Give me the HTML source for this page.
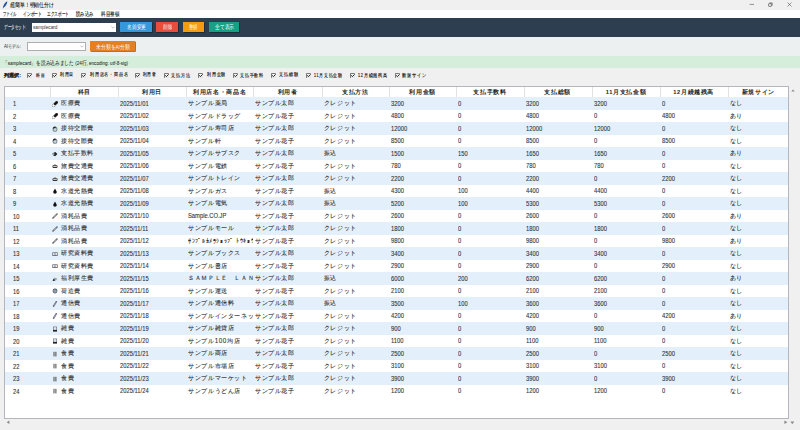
<!DOCTYPE html>
<html><head><meta charset="utf-8"><style>
*{box-sizing:border-box;margin:0;padding:0}
html,body{width:800px;height:430px;overflow:hidden;background:#f0f0f0;font-family:"Liberation Sans",sans-serif;color:#222}
.a{position:absolute}
.t{position:absolute;white-space:nowrap;line-height:1;-webkit-text-stroke:0.1px currentColor}
svg{display:block}
</style></head><body>

<div class="a" style="left:0;top:0;width:800px;height:9.5px;background:#f0f0f0"></div>
<svg class="a" style="left:2px;top:1px" width="6" height="8" viewBox="0 0 6 8"><path d="M5.4 0.3 C3.6 0.9 1.6 3.2 1.1 5.8 L0.8 7.8 L1.6 6.6 C3.8 5.6 5.1 3 5.4 0.3Z" fill="#2f5fa8"/><path d="M1.4 6.4 L4.6 1.2" stroke="#1c3a70" stroke-width="0.4"/></svg>
<svg class="a" style="left:749px;top:2px" width="6" height="5" viewBox="0 0 6 5"><path d="M0.6 2.4 H5.0" stroke="#444" stroke-width="0.55"/></svg>
<svg class="a" style="left:767.5px;top:2px" width="5" height="5" viewBox="0 0 5 5"><path d="M1.5 0.9 H4.2 V3.6" fill="none" stroke="#444" stroke-width="0.6"/><rect x="0.6" y="1.6" width="2.8" height="2.8" rx="0.5" fill="none" stroke="#444" stroke-width="0.65"/></svg>
<svg class="a" style="left:787.3px;top:2.3px" width="5" height="5" viewBox="0 0 5 5"><path d="M0.5 0.5 L4.5 4.5 M4.5 0.5 L0.5 4.5" stroke="#444" stroke-width="0.55"/></svg>
<div class="a" style="left:0;top:9.5px;width:800px;height:8.5px;background:#fff"></div>
<div class="a" style="left:0;top:18px;width:800px;height:18.7px;background:#2c3e50"></div>
<div class="a" style="left:31.6px;top:22.8px;width:84.6px;height:8.8px;background:#fff"></div>
<svg class="a" style="left:110.8px;top:26px" width="4" height="3" viewBox="0 0 4 3"><path d="M0.4 0.6 L2 2.2 L3.6 0.6" fill="none" stroke="#999" stroke-width="0.6"/></svg>
<div class="a" style="left:120.3px;top:22px;width:31.700000000000003px;height:10.2px;background:#3498db;box-shadow:0.7px 0.7px 0 #1a252f"></div>
<div class="a" style="left:156.3px;top:22px;width:22.0px;height:10.2px;background:#e74c3c;box-shadow:0.7px 0.7px 0 #1a252f"></div>
<div class="a" style="left:183px;top:22px;width:21.30000000000001px;height:10.2px;background:#f39c12;box-shadow:0.7px 0.7px 0 #1a252f"></div>
<div class="a" style="left:209px;top:22px;width:30px;height:10.2px;background:#16a085;box-shadow:0.7px 0.7px 0 #1a252f"></div>
<div class="a" style="left:0;top:36.7px;width:800px;height:19.3px;background:#ecf0f1"></div>
<div class="a" style="left:26.5px;top:42.2px;width:59px;height:8.6px;background:#fff;border:0.6px solid #adadad"></div>
<svg class="a" style="left:80.3px;top:45.2px" width="4" height="3" viewBox="0 0 4 3"><path d="M0.4 0.6 L2 2.2 L3.6 0.6" fill="none" stroke="#999" stroke-width="0.6"/></svg>
<div class="a" style="left:90px;top:41.3px;width:44.8px;height:10.2px;background:#e67e22;box-shadow:0.7px 0.7px 0 #7a4310"></div>
<div class="a" style="left:0;top:56px;width:800px;height:12.3px;background:#d5eedb"></div>
<svg class="a" style="left:27px;top:72.8px" width="5.2" height="5.2" viewBox="0 0 5.2 5.2"><rect x="0" y="0" width="5.2" height="5.2" fill="#f7f7f7"/><path d="M0.5 5 V0.5 H4.8" fill="none" stroke="#555" stroke-width="0.8"/><path d="M4.8 0.5 V4.8 H0.5" fill="none" stroke="#c8c8c8" stroke-width="0.5"/><path d="M1.3 2.3 L2.4 3.7 L4.6 1.3" fill="none" stroke="#222" stroke-width="1"/></svg>
<svg class="a" style="left:51.5px;top:72.8px" width="5.2" height="5.2" viewBox="0 0 5.2 5.2"><rect x="0" y="0" width="5.2" height="5.2" fill="#f7f7f7"/><path d="M0.5 5 V0.5 H4.8" fill="none" stroke="#555" stroke-width="0.8"/><path d="M4.8 0.5 V4.8 H0.5" fill="none" stroke="#c8c8c8" stroke-width="0.5"/><path d="M1.3 2.3 L2.4 3.7 L4.6 1.3" fill="none" stroke="#222" stroke-width="1"/></svg>
<svg class="a" style="left:81px;top:72.8px" width="5.2" height="5.2" viewBox="0 0 5.2 5.2"><rect x="0" y="0" width="5.2" height="5.2" fill="#f7f7f7"/><path d="M0.5 5 V0.5 H4.8" fill="none" stroke="#555" stroke-width="0.8"/><path d="M4.8 0.5 V4.8 H0.5" fill="none" stroke="#c8c8c8" stroke-width="0.5"/><path d="M1.3 2.3 L2.4 3.7 L4.6 1.3" fill="none" stroke="#222" stroke-width="1"/></svg>
<svg class="a" style="left:135px;top:72.8px" width="5.2" height="5.2" viewBox="0 0 5.2 5.2"><rect x="0" y="0" width="5.2" height="5.2" fill="#f7f7f7"/><path d="M0.5 5 V0.5 H4.8" fill="none" stroke="#555" stroke-width="0.8"/><path d="M4.8 0.5 V4.8 H0.5" fill="none" stroke="#c8c8c8" stroke-width="0.5"/><path d="M1.3 2.3 L2.4 3.7 L4.6 1.3" fill="none" stroke="#222" stroke-width="1"/></svg>
<svg class="a" style="left:164px;top:72.8px" width="5.2" height="5.2" viewBox="0 0 5.2 5.2"><rect x="0" y="0" width="5.2" height="5.2" fill="#f7f7f7"/><path d="M0.5 5 V0.5 H4.8" fill="none" stroke="#555" stroke-width="0.8"/><path d="M4.8 0.5 V4.8 H0.5" fill="none" stroke="#c8c8c8" stroke-width="0.5"/><path d="M1.3 2.3 L2.4 3.7 L4.6 1.3" fill="none" stroke="#222" stroke-width="1"/></svg>
<svg class="a" style="left:197.8px;top:72.8px" width="5.2" height="5.2" viewBox="0 0 5.2 5.2"><rect x="0" y="0" width="5.2" height="5.2" fill="#f7f7f7"/><path d="M0.5 5 V0.5 H4.8" fill="none" stroke="#555" stroke-width="0.8"/><path d="M4.8 0.5 V4.8 H0.5" fill="none" stroke="#c8c8c8" stroke-width="0.5"/><path d="M1.3 2.3 L2.4 3.7 L4.6 1.3" fill="none" stroke="#222" stroke-width="1"/></svg>
<svg class="a" style="left:232.5px;top:72.8px" width="5.2" height="5.2" viewBox="0 0 5.2 5.2"><rect x="0" y="0" width="5.2" height="5.2" fill="#f7f7f7"/><path d="M0.5 5 V0.5 H4.8" fill="none" stroke="#555" stroke-width="0.8"/><path d="M4.8 0.5 V4.8 H0.5" fill="none" stroke="#c8c8c8" stroke-width="0.5"/><path d="M1.3 2.3 L2.4 3.7 L4.6 1.3" fill="none" stroke="#222" stroke-width="1"/></svg>
<svg class="a" style="left:271.2px;top:72.8px" width="5.2" height="5.2" viewBox="0 0 5.2 5.2"><rect x="0" y="0" width="5.2" height="5.2" fill="#f7f7f7"/><path d="M0.5 5 V0.5 H4.8" fill="none" stroke="#555" stroke-width="0.8"/><path d="M4.8 0.5 V4.8 H0.5" fill="none" stroke="#c8c8c8" stroke-width="0.5"/><path d="M1.3 2.3 L2.4 3.7 L4.6 1.3" fill="none" stroke="#222" stroke-width="1"/></svg>
<svg class="a" style="left:306px;top:72.8px" width="5.2" height="5.2" viewBox="0 0 5.2 5.2"><rect x="0" y="0" width="5.2" height="5.2" fill="#f7f7f7"/><path d="M0.5 5 V0.5 H4.8" fill="none" stroke="#555" stroke-width="0.8"/><path d="M4.8 0.5 V4.8 H0.5" fill="none" stroke="#c8c8c8" stroke-width="0.5"/><path d="M1.3 2.3 L2.4 3.7 L4.6 1.3" fill="none" stroke="#222" stroke-width="1"/></svg>
<svg class="a" style="left:350px;top:72.8px" width="5.2" height="5.2" viewBox="0 0 5.2 5.2"><rect x="0" y="0" width="5.2" height="5.2" fill="#f7f7f7"/><path d="M0.5 5 V0.5 H4.8" fill="none" stroke="#555" stroke-width="0.8"/><path d="M4.8 0.5 V4.8 H0.5" fill="none" stroke="#c8c8c8" stroke-width="0.5"/><path d="M1.3 2.3 L2.4 3.7 L4.6 1.3" fill="none" stroke="#222" stroke-width="1"/></svg>
<svg class="a" style="left:394.5px;top:72.8px" width="5.2" height="5.2" viewBox="0 0 5.2 5.2"><rect x="0" y="0" width="5.2" height="5.2" fill="#f7f7f7"/><path d="M0.5 5 V0.5 H4.8" fill="none" stroke="#555" stroke-width="0.8"/><path d="M4.8 0.5 V4.8 H0.5" fill="none" stroke="#c8c8c8" stroke-width="0.5"/><path d="M1.3 2.3 L2.4 3.7 L4.6 1.3" fill="none" stroke="#222" stroke-width="1"/></svg>
<div class="a" style="left:4.1px;top:86.1px;width:785.3px;height:332.79999999999995px;background:#fff;border:1px solid #b3b7bd"></div>
<div class="a" style="left:50.25px;top:87.19999999999999px;width:0.6px;height:9.600000000000005px;background:#e2e2e2"></div>
<div class="a" style="left:118.1px;top:87.19999999999999px;width:0.6px;height:9.600000000000005px;background:#e2e2e2"></div>
<div class="a" style="left:186.25px;top:87.19999999999999px;width:0.6px;height:9.600000000000005px;background:#e2e2e2"></div>
<div class="a" style="left:253.1px;top:87.19999999999999px;width:0.6px;height:9.600000000000005px;background:#e2e2e2"></div>
<div class="a" style="left:321.9px;top:87.19999999999999px;width:0.6px;height:9.600000000000005px;background:#e2e2e2"></div>
<div class="a" style="left:389px;top:87.19999999999999px;width:0.6px;height:9.600000000000005px;background:#e2e2e2"></div>
<div class="a" style="left:456.25px;top:87.19999999999999px;width:0.6px;height:9.600000000000005px;background:#e2e2e2"></div>
<div class="a" style="left:523.5px;top:87.19999999999999px;width:0.6px;height:9.600000000000005px;background:#e2e2e2"></div>
<div class="a" style="left:591.9px;top:87.19999999999999px;width:0.6px;height:9.600000000000005px;background:#e2e2e2"></div>
<div class="a" style="left:660px;top:87.19999999999999px;width:0.6px;height:9.600000000000005px;background:#e2e2e2"></div>
<div class="a" style="left:727.5px;top:87.19999999999999px;width:0.6px;height:9.600000000000005px;background:#e2e2e2"></div>
<div class="a" style="left:5.1px;top:97.0px;width:783.3px;height:12.5px;background:#e3f0fb"></div>
<div class="a" style="left:52.2px;top:100.7px;width:6px;height:6px"><svg width="6" height="6" viewBox="0 0 6 6"><path d="M1.3 4.7 L4.7 1.3" stroke="#666" stroke-width="2.9" stroke-linecap="round"/><path d="M1.3 4.7 L4.7 1.3" stroke="#fff" stroke-width="2.1" stroke-linecap="round"/><path d="M3 3 L4.7 1.3" stroke="#111" stroke-width="2.4" stroke-linecap="round"/></svg></div>
<div class="a" style="left:52.2px;top:113.2px;width:6px;height:6px"><svg width="6" height="6" viewBox="0 0 6 6"><path d="M1.3 4.7 L4.7 1.3" stroke="#666" stroke-width="2.9" stroke-linecap="round"/><path d="M1.3 4.7 L4.7 1.3" stroke="#fff" stroke-width="2.1" stroke-linecap="round"/><path d="M3 3 L4.7 1.3" stroke="#111" stroke-width="2.4" stroke-linecap="round"/></svg></div>
<div class="a" style="left:5.1px;top:122.0px;width:783.3px;height:12.5px;background:#e3f0fb"></div>
<div class="a" style="left:52.2px;top:125.7px;width:6px;height:6px"><svg width="6" height="6" viewBox="0 0 6 6"><ellipse cx="3" cy="3.2" rx="2.4" ry="2.6" fill="#7a8a90"/><path d="M0.8 2.4 A2.4 2.4 0 0 1 4.2 0.9 L2.5 2.6Z" fill="#222"/><ellipse cx="3.1" cy="3.6" rx="1.4" ry="1.4" fill="#c9d6da"/></svg></div>
<div class="a" style="left:52.2px;top:138.2px;width:6px;height:6px"><svg width="6" height="6" viewBox="0 0 6 6"><ellipse cx="3" cy="3.2" rx="2.4" ry="2.6" fill="#7a8a90"/><path d="M0.8 2.4 A2.4 2.4 0 0 1 4.2 0.9 L2.5 2.6Z" fill="#222"/><ellipse cx="3.1" cy="3.6" rx="1.4" ry="1.4" fill="#c9d6da"/></svg></div>
<div class="a" style="left:5.1px;top:147.0px;width:783.3px;height:12.5px;background:#e3f0fb"></div>
<div class="a" style="left:52.2px;top:150.7px;width:6px;height:6px"><svg width="6" height="6" viewBox="0 0 6 6"><path d="M0.6 2.2 L3.4 0.9 L5.4 3 L3.2 5.2 L0.9 4.2Z" fill="#222"/><path d="M0.8 2.4 L2.4 2 L2.2 4.3 L0.9 4Z" fill="#9fb1b5"/></svg></div>
<div class="a" style="left:52.2px;top:163.2px;width:6px;height:6px"><svg width="6" height="6" viewBox="0 0 6 6"><path d="M1.4 2.4 Q3 0.4 4.6 2.4Z" fill="#333"/><rect x="0.5" y="2.3" width="5" height="2.6" rx="0.8" fill="#333"/><rect x="1.2" y="2.9" width="3.6" height="1" fill="#d8d8d8"/></svg></div>
<div class="a" style="left:5.1px;top:172.0px;width:783.3px;height:12.5px;background:#e3f0fb"></div>
<div class="a" style="left:52.2px;top:175.7px;width:6px;height:6px"><svg width="6" height="6" viewBox="0 0 6 6"><path d="M1.4 2.4 Q3 0.4 4.6 2.4Z" fill="#333"/><rect x="0.5" y="2.3" width="5" height="2.6" rx="0.8" fill="#333"/><rect x="1.2" y="2.9" width="3.6" height="1" fill="#d8d8d8"/></svg></div>
<div class="a" style="left:52.2px;top:188.2px;width:6px;height:6px"><svg width="6" height="6" viewBox="0 0 6 6"><path d="M3 0.4 C3.2 1.4 4.8 2.8 4.8 4 A1.8 1.8 0 0 1 1.2 4 C1.2 2.8 2.8 1.4 3 0.4Z" fill="#111"/></svg></div>
<div class="a" style="left:5.1px;top:197.0px;width:783.3px;height:12.5px;background:#e3f0fb"></div>
<div class="a" style="left:52.2px;top:200.7px;width:6px;height:6px"><svg width="6" height="6" viewBox="0 0 6 6"><path d="M3 0.4 C3.2 1.4 4.8 2.8 4.8 4 A1.8 1.8 0 0 1 1.2 4 C1.2 2.8 2.8 1.4 3 0.4Z" fill="#111"/></svg></div>
<div class="a" style="left:52.2px;top:213.2px;width:6px;height:6px"><svg width="6" height="6" viewBox="0 0 6 6"><path d="M1 5 L5 1" stroke="#555" stroke-width="1.5" stroke-linecap="round"/><path d="M1.6 4.4 L4.5 1.5" stroke="#c8ccd6" stroke-width="0.6"/></svg></div>
<div class="a" style="left:5.1px;top:222.0px;width:783.3px;height:12.5px;background:#e3f0fb"></div>
<div class="a" style="left:52.2px;top:225.7px;width:6px;height:6px"><svg width="6" height="6" viewBox="0 0 6 6"><path d="M1 5 L5 1" stroke="#555" stroke-width="1.5" stroke-linecap="round"/><path d="M1.6 4.4 L4.5 1.5" stroke="#c8ccd6" stroke-width="0.6"/></svg></div>
<div class="a" style="left:52.2px;top:238.2px;width:6px;height:6px"><svg width="6" height="6" viewBox="0 0 6 6"><path d="M1 5 L5 1" stroke="#555" stroke-width="1.5" stroke-linecap="round"/><path d="M1.6 4.4 L4.5 1.5" stroke="#c8ccd6" stroke-width="0.6"/></svg></div>
<div class="a" style="left:5.1px;top:247.0px;width:783.3px;height:12.5px;background:#e3f0fb"></div>
<div class="a" style="left:52.2px;top:250.7px;width:6px;height:6px"><svg width="6" height="6" viewBox="0 0 6 6"><rect x="0.4" y="1.4" width="5.2" height="3.6" fill="#556"/><rect x="1" y="2" width="1.7" height="2.3" fill="#dde4ee"/><rect x="3.3" y="2" width="1.7" height="2.3" fill="#dde4ee"/></svg></div>
<div class="a" style="left:52.2px;top:263.2px;width:6px;height:6px"><svg width="6" height="6" viewBox="0 0 6 6"><rect x="0.4" y="1.4" width="5.2" height="3.6" fill="#556"/><rect x="1" y="2" width="1.7" height="2.3" fill="#dde4ee"/><rect x="3.3" y="2" width="1.7" height="2.3" fill="#dde4ee"/></svg></div>
<div class="a" style="left:5.1px;top:272.0px;width:783.3px;height:12.5px;background:#e3f0fb"></div>
<div class="a" style="left:52.2px;top:275.7px;width:6px;height:6px"><svg width="6" height="6" viewBox="0 0 6 6"><path d="M0.6 5 L2.6 1.4 L5.4 2.8 L4 4.6Z" fill="#9aa4b0"/><path d="M0.6 5 L1.8 2.6 L3 4.4Z" fill="#111"/></svg></div>
<div class="a" style="left:52.2px;top:288.2px;width:6px;height:6px"><svg width="6" height="6" viewBox="0 0 6 6"><circle cx="3" cy="3" r="2.4" fill="#556070"/><circle cx="3" cy="3" r="1.6" fill="#d8dde6"/><path d="M3 0.8 V5.2 M0.8 3 H5.2" stroke="#556070" stroke-width="0.6"/></svg></div>
<div class="a" style="left:5.1px;top:297.0px;width:783.3px;height:12.5px;background:#e3f0fb"></div>
<div class="a" style="left:52.2px;top:300.7px;width:6px;height:6px"><svg width="6" height="6" viewBox="0 0 6 6"><path d="M1.6 5.2 L4.2 0.8" stroke="#6a6a80" stroke-width="1.6" stroke-linecap="round"/><path d="M2 4.4 L3.8 1.4" stroke="#b8c0d0" stroke-width="0.5"/></svg></div>
<div class="a" style="left:52.2px;top:313.2px;width:6px;height:6px"><svg width="6" height="6" viewBox="0 0 6 6"><path d="M1.6 5.2 L4.2 0.8" stroke="#6a6a80" stroke-width="1.6" stroke-linecap="round"/><path d="M2 4.4 L3.8 1.4" stroke="#b8c0d0" stroke-width="0.5"/></svg></div>
<div class="a" style="left:5.1px;top:322.0px;width:783.3px;height:12.5px;background:#e3f0fb"></div>
<div class="a" style="left:52.2px;top:325.7px;width:6px;height:6px"><svg width="6" height="6" viewBox="0 0 6 6"><rect x="1" y="0.6" width="4" height="4.8" fill="#606a78"/><rect x="1.6" y="1.2" width="2.8" height="2.6" fill="#e0e6ee"/><rect x="1" y="4.2" width="4" height="1.2" fill="#111"/></svg></div>
<div class="a" style="left:52.2px;top:338.2px;width:6px;height:6px"><svg width="6" height="6" viewBox="0 0 6 6"><rect x="1" y="0.6" width="4" height="4.8" fill="#606a78"/><rect x="1.6" y="1.2" width="2.8" height="2.6" fill="#e0e6ee"/><rect x="1" y="4.2" width="4" height="1.2" fill="#111"/></svg></div>
<div class="a" style="left:5.1px;top:347.0px;width:783.3px;height:12.5px;background:#e3f0fb"></div>
<div class="a" style="left:52.2px;top:350.7px;width:6px;height:6px"><svg width="6" height="6" viewBox="0 0 6 6"><path d="M2 0.8 V5.4 M3.9 0.8 V5.4" stroke="#333" stroke-width="0.9"/></svg></div>
<div class="a" style="left:52.2px;top:363.2px;width:6px;height:6px"><svg width="6" height="6" viewBox="0 0 6 6"><path d="M2 0.8 V5.4 M3.9 0.8 V5.4" stroke="#333" stroke-width="0.9"/></svg></div>
<div class="a" style="left:5.1px;top:372.0px;width:783.3px;height:12.5px;background:#e3f0fb"></div>
<div class="a" style="left:52.2px;top:375.7px;width:6px;height:6px"><svg width="6" height="6" viewBox="0 0 6 6"><path d="M2 0.8 V5.4 M3.9 0.8 V5.4" stroke="#333" stroke-width="0.9"/></svg></div>
<div class="a" style="left:52.2px;top:388.2px;width:6px;height:6px"><svg width="6" height="6" viewBox="0 0 6 6"><path d="M2 0.8 V5.4 M3.9 0.8 V5.4" stroke="#333" stroke-width="0.9"/></svg></div>
<svg class="a" style="left:790.6px;top:88.8px" width="4" height="3" viewBox="0 0 4 3"><path d="M0.3 2.6 L2 0.4 L3.7 2.6Z" fill="#8a8a8a"/></svg>
<svg class="a" style="left:6px;top:420.3px" width="4" height="5" viewBox="0 0 4 5"><path d="M3.4 0.6 L0.6 2.3 L3.4 4Z" fill="#8a8a8a"/></svg>
<svg class="a" style="left:783.5px;top:420.3px" width="4" height="5" viewBox="0 0 4 5"><path d="M0.4 0.6 L3.4 2.3 L0.4 4Z" fill="#8a8a8a"/></svg>
<svg class="a" style="left:790.3px;top:420.8px" width="5" height="4" viewBox="0 0 5 4"><path d="M0.4 0.4 L4.2 0.4 L2.3 3.2Z" fill="#8a8a8a"/></svg>
<div class="t" id="t0" style="left:10.00px;top:2.92px;font-size:5.6px;color:#222;transform:scaleX(0.815);transform-origin:0 0;-webkit-text-stroke:0.1px currentColor">超簡単！明細仕分け</div>
<div class="t" id="t1" style="left:2.65px;top:11.92px;font-size:5.6px;color:#1a1a1a;transform:scaleX(0.548);transform-origin:0 0;-webkit-text-stroke:0.12px currentColor">ファイル</div>
<div class="t" id="t2" style="left:22.51px;top:11.92px;font-size:5.6px;color:#1a1a1a;transform:scaleX(0.633);transform-origin:0 0;-webkit-text-stroke:0.12px currentColor">インポート</div>
<div class="t" id="t3" style="left:46.56px;top:11.92px;font-size:5.6px;color:#1a1a1a;transform:scaleX(0.609);transform-origin:0 0;-webkit-text-stroke:0.12px currentColor">エクスポート</div>
<div class="t" id="t4" style="left:75.73px;top:11.92px;font-size:5.6px;color:#1a1a1a;transform:scaleX(0.731);transform-origin:0 0;-webkit-text-stroke:0.12px currentColor">読み込み</div>
<div class="t" id="t5" style="left:100.75px;top:11.92px;font-size:5.6px;color:#1a1a1a;transform:scaleX(0.753);transform-origin:0 0;-webkit-text-stroke:0.12px currentColor">科目整頓</div>
<div class="t" id="t6" style="left:4.27px;top:25.12px;font-size:5.6px;color:#e6ebee;transform:scaleX(0.591);transform-origin:0 0;-webkit-text-stroke:0.08px currentColor">データセット:</div>
<div class="t" id="t7" style="left:32.77px;top:24.00px;font-size:6.0px;color:#333;transform:scaleX(0.789);transform-origin:0 0;-webkit-text-stroke:0">samplecard</div>
<div class="t" id="t8" style="left:126.62px;top:24.77px;font-size:5.5px;color:#fff;transform:scaleX(0.801);transform-origin:0 0;-webkit-text-stroke:0">名前変更</div>
<div class="t" id="t9" style="left:163.25px;top:24.77px;font-size:5.5px;color:#fff;transform:scaleX(0.750);transform-origin:0 0;-webkit-text-stroke:0">削除</div>
<div class="t" id="t10" style="left:189.00px;top:24.77px;font-size:5.5px;color:#fff;transform:scaleX(0.714);transform-origin:0 0;-webkit-text-stroke:0">整頓</div>
<div class="t" id="t11" style="left:215.24px;top:24.77px;font-size:5.5px;color:#fff;transform:scaleX(0.792);transform-origin:0 0;-webkit-text-stroke:0">全て表示</div>
<div class="t" id="t12" style="left:4.03px;top:43.53px;font-size:5.4px;color:#2a2a2a;transform:scaleX(0.792);transform-origin:0 0;-webkit-text-stroke:0">AIモデル:</div>
<div class="t" id="t13" style="left:96.00px;top:44.98px;font-size:5.5px;color:#fff;transform:scaleX(0.817);transform-origin:0 0;-webkit-text-stroke:0">未分類をAI分類</div>
<div class="t" id="t14" style="left:2.63px;top:60.61px;font-size:5.8px;color:#1f2a22;transform:scaleX(0.788);transform-origin:0 0;-webkit-text-stroke:0.05px currentColor">「samplecard」を読み込みました (24行, encoding: utf-8-sig)</div>
<div class="t" id="t15" style="left:4.01px;top:73.43px;font-size:5.4px;color:#222;font-weight:bold;transform:scaleX(1.012);transform-origin:0 0;">列選択:</div>
<div class="t" id="t16" style="left:35.76px;top:73.77px;font-size:4.6px;color:#1e1e1e;transform:scaleX(0.759);transform-origin:0 0;letter-spacing:1.0px;-webkit-text-stroke:0.15px currentColor">科目</div>
<div class="t" id="t17" style="left:59.78px;top:73.27px;font-size:4.6px;color:#1e1e1e;transform:scaleX(0.778);transform-origin:0 0;letter-spacing:1.0px;-webkit-text-stroke:0.15px currentColor">利用日</div>
<div class="t" id="t18" style="left:89.91px;top:73.27px;font-size:4.6px;color:#1e1e1e;transform:scaleX(0.802);transform-origin:0 0;letter-spacing:1.0px;-webkit-text-stroke:0.15px currentColor">利用店名・商品名</div>
<div class="t" id="t19" style="left:142.74px;top:73.27px;font-size:4.6px;color:#1e1e1e;transform:scaleX(0.737);transform-origin:0 0;letter-spacing:1.0px;-webkit-text-stroke:0.15px currentColor">利用者</div>
<div class="t" id="t20" style="left:171.00px;top:73.77px;font-size:4.6px;color:#1e1e1e;transform:scaleX(0.828);transform-origin:0 0;letter-spacing:1.0px;-webkit-text-stroke:0.15px currentColor">支払方法</div>
<div class="t" id="t21" style="left:206.79px;top:73.27px;font-size:4.6px;color:#1e1e1e;transform:scaleX(0.792);transform-origin:0 0;letter-spacing:1.0px;-webkit-text-stroke:0.15px currentColor">利用金額</div>
<div class="t" id="t22" style="left:240.00px;top:73.77px;font-size:4.6px;color:#1e1e1e;transform:scaleX(0.800);transform-origin:0 0;letter-spacing:1.0px;-webkit-text-stroke:0.15px currentColor">支払手数料</div>
<div class="t" id="t23" style="left:279.00px;top:73.27px;font-size:4.6px;color:#1e1e1e;transform:scaleX(0.828);transform-origin:0 0;letter-spacing:1.0px;-webkit-text-stroke:0.15px currentColor">支払総額</div>
<div class="t" id="t24" style="left:314.00px;top:73.77px;font-size:4.6px;color:#1e1e1e;transform:scaleX(0.778);transform-origin:0 0;letter-spacing:1.0px;-webkit-text-stroke:0.15px currentColor">11月支払金額</div>
<div class="t" id="t25" style="left:358.00px;top:73.77px;font-size:4.6px;color:#1e1e1e;transform:scaleX(0.806);transform-origin:0 0;letter-spacing:1.0px;-webkit-text-stroke:0.15px currentColor">12月繰越残高</div>
<div class="t" id="t26" style="left:402.00px;top:73.77px;font-size:4.6px;color:#1e1e1e;transform:scaleX(0.828);transform-origin:0 0;letter-spacing:1.0px;-webkit-text-stroke:0.15px currentColor">新規サイン</div>
<div class="t" id="t27" style="left:50.25px;top:90.32px;font-size:5.6px;color:#1a1a1a;font-weight:bold;width:67.85px;text-align:center;letter-spacing:0.65px;-webkit-text-stroke:0">科目</div>
<div class="t" id="t28" style="left:118.10px;top:90.32px;font-size:5.6px;color:#1a1a1a;font-weight:bold;width:68.15px;text-align:center;letter-spacing:0.65px;-webkit-text-stroke:0">利用日</div>
<div class="t" id="t29" style="left:186.25px;top:90.32px;font-size:5.6px;color:#1a1a1a;font-weight:bold;width:66.85px;text-align:center;letter-spacing:0.65px;-webkit-text-stroke:0">利用店名・商品名</div>
<div class="t" id="t30" style="left:253.10px;top:90.32px;font-size:5.6px;color:#1a1a1a;font-weight:bold;width:68.80px;text-align:center;letter-spacing:0.65px;-webkit-text-stroke:0">利用者</div>
<div class="t" id="t31" style="left:321.90px;top:90.32px;font-size:5.6px;color:#1a1a1a;font-weight:bold;width:67.10px;text-align:center;letter-spacing:0.65px;-webkit-text-stroke:0">支払方法</div>
<div class="t" id="t32" style="left:389.00px;top:90.32px;font-size:5.6px;color:#1a1a1a;font-weight:bold;width:67.25px;text-align:center;letter-spacing:0.65px;-webkit-text-stroke:0">利用金額</div>
<div class="t" id="t33" style="left:456.25px;top:90.32px;font-size:5.6px;color:#1a1a1a;font-weight:bold;width:67.25px;text-align:center;letter-spacing:0.65px;-webkit-text-stroke:0">支払手数料</div>
<div class="t" id="t34" style="left:523.50px;top:90.32px;font-size:5.6px;color:#1a1a1a;font-weight:bold;width:68.40px;text-align:center;letter-spacing:0.65px;-webkit-text-stroke:0">支払総額</div>
<div class="t" id="t35" style="left:591.90px;top:90.32px;font-size:5.6px;color:#1a1a1a;font-weight:bold;width:68.10px;text-align:center;letter-spacing:0.65px;-webkit-text-stroke:0">11月支払金額</div>
<div class="t" id="t36" style="left:660.00px;top:90.32px;font-size:5.6px;color:#1a1a1a;font-weight:bold;width:67.50px;text-align:center;letter-spacing:0.65px;-webkit-text-stroke:0">12月繰越残高</div>
<div class="t" id="t37" style="left:727.50px;top:90.32px;font-size:5.6px;color:#1a1a1a;font-weight:bold;width:61.40px;text-align:center;letter-spacing:0.65px;-webkit-text-stroke:0">新規サイン</div>
<div class="t" id="t38" style="left:13.40px;top:101.05px;font-size:6.4px;color:#333;transform:scaleX(0.9);transform-origin:0 0">1</div>
<div class="t" id="t39" style="left:61.00px;top:100.19px;font-size:6.3px;color:#3a3a3a;letter-spacing:0.55px">医療費</div>
<div class="t" id="t40" style="left:120.10px;top:100.94px;font-size:6.6px;color:#333;width:65.65px;overflow:hidden;transform:scaleX(0.88);transform-origin:0 0">2025/11/01</div>
<div class="t" id="t41" style="left:188.25px;top:100.19px;font-size:6.3px;color:#333;width:64.35px;overflow:hidden;letter-spacing:0.6px">サンプル薬局</div>
<div class="t" id="t42" style="left:255.10px;top:100.19px;font-size:6.3px;color:#333;width:66.30px;overflow:hidden;letter-spacing:0.6px">サンプル太郎</div>
<div class="t" id="t43" style="left:323.90px;top:100.19px;font-size:6.3px;color:#333;width:64.60px;overflow:hidden;letter-spacing:0.6px">クレジット</div>
<div class="t" id="t44" style="left:391.00px;top:100.94px;font-size:6.6px;color:#333;width:64.75px;overflow:hidden;transform:scaleX(0.88);transform-origin:0 0">3200</div>
<div class="t" id="t45" style="left:458.25px;top:100.94px;font-size:6.6px;color:#333;width:64.75px;overflow:hidden;transform:scaleX(0.88);transform-origin:0 0">0</div>
<div class="t" id="t46" style="left:525.50px;top:100.94px;font-size:6.6px;color:#333;width:65.90px;overflow:hidden;transform:scaleX(0.88);transform-origin:0 0">3200</div>
<div class="t" id="t47" style="left:593.90px;top:100.94px;font-size:6.6px;color:#333;width:65.60px;overflow:hidden;transform:scaleX(0.88);transform-origin:0 0">3200</div>
<div class="t" id="t48" style="left:662.00px;top:100.94px;font-size:6.6px;color:#333;width:65.00px;overflow:hidden;transform:scaleX(0.88);transform-origin:0 0">0</div>
<div class="t" id="t49" style="left:729.50px;top:100.19px;font-size:6.3px;color:#333;width:58.90px;overflow:hidden;letter-spacing:0.6px">なし</div>
<div class="t" id="t50" style="left:13.40px;top:113.55px;font-size:6.4px;color:#333;transform:scaleX(0.9);transform-origin:0 0">2</div>
<div class="t" id="t51" style="left:61.00px;top:112.69px;font-size:6.3px;color:#3a3a3a;letter-spacing:0.55px">医療費</div>
<div class="t" id="t52" style="left:120.10px;top:113.44px;font-size:6.6px;color:#333;width:65.65px;overflow:hidden;transform:scaleX(0.88);transform-origin:0 0">2025/11/02</div>
<div class="t" id="t53" style="left:188.25px;top:112.69px;font-size:6.3px;color:#333;width:64.35px;overflow:hidden;letter-spacing:0.6px">サンプルドラッグ</div>
<div class="t" id="t54" style="left:255.10px;top:112.69px;font-size:6.3px;color:#333;width:66.30px;overflow:hidden;letter-spacing:0.6px">サンプル花子</div>
<div class="t" id="t55" style="left:323.90px;top:112.69px;font-size:6.3px;color:#333;width:64.60px;overflow:hidden;letter-spacing:0.6px">クレジット</div>
<div class="t" id="t56" style="left:391.00px;top:113.44px;font-size:6.6px;color:#333;width:64.75px;overflow:hidden;transform:scaleX(0.88);transform-origin:0 0">4800</div>
<div class="t" id="t57" style="left:458.25px;top:113.44px;font-size:6.6px;color:#333;width:64.75px;overflow:hidden;transform:scaleX(0.88);transform-origin:0 0">0</div>
<div class="t" id="t58" style="left:525.50px;top:113.44px;font-size:6.6px;color:#333;width:65.90px;overflow:hidden;transform:scaleX(0.88);transform-origin:0 0">4800</div>
<div class="t" id="t59" style="left:593.90px;top:113.44px;font-size:6.6px;color:#333;width:65.60px;overflow:hidden;transform:scaleX(0.88);transform-origin:0 0">0</div>
<div class="t" id="t60" style="left:662.00px;top:113.44px;font-size:6.6px;color:#333;width:65.00px;overflow:hidden;transform:scaleX(0.88);transform-origin:0 0">4800</div>
<div class="t" id="t61" style="left:729.50px;top:112.69px;font-size:6.3px;color:#333;width:58.90px;overflow:hidden;letter-spacing:0.6px">あり</div>
<div class="t" id="t62" style="left:13.40px;top:126.05px;font-size:6.4px;color:#333;transform:scaleX(0.9);transform-origin:0 0">3</div>
<div class="t" id="t63" style="left:61.00px;top:125.19px;font-size:6.3px;color:#3a3a3a;letter-spacing:0.55px">接待交際費</div>
<div class="t" id="t64" style="left:120.10px;top:125.94px;font-size:6.6px;color:#333;width:65.65px;overflow:hidden;transform:scaleX(0.88);transform-origin:0 0">2025/11/03</div>
<div class="t" id="t65" style="left:188.25px;top:125.19px;font-size:6.3px;color:#333;width:64.35px;overflow:hidden;letter-spacing:0.6px">サンプル寿司店</div>
<div class="t" id="t66" style="left:255.10px;top:125.19px;font-size:6.3px;color:#333;width:66.30px;overflow:hidden;letter-spacing:0.6px">サンプル太郎</div>
<div class="t" id="t67" style="left:323.90px;top:125.19px;font-size:6.3px;color:#333;width:64.60px;overflow:hidden;letter-spacing:0.6px">クレジット</div>
<div class="t" id="t68" style="left:391.00px;top:125.94px;font-size:6.6px;color:#333;width:64.75px;overflow:hidden;transform:scaleX(0.88);transform-origin:0 0">12000</div>
<div class="t" id="t69" style="left:458.25px;top:125.94px;font-size:6.6px;color:#333;width:64.75px;overflow:hidden;transform:scaleX(0.88);transform-origin:0 0">0</div>
<div class="t" id="t70" style="left:525.50px;top:125.94px;font-size:6.6px;color:#333;width:65.90px;overflow:hidden;transform:scaleX(0.88);transform-origin:0 0">12000</div>
<div class="t" id="t71" style="left:593.90px;top:125.94px;font-size:6.6px;color:#333;width:65.60px;overflow:hidden;transform:scaleX(0.88);transform-origin:0 0">12000</div>
<div class="t" id="t72" style="left:662.00px;top:125.94px;font-size:6.6px;color:#333;width:65.00px;overflow:hidden;transform:scaleX(0.88);transform-origin:0 0">0</div>
<div class="t" id="t73" style="left:729.50px;top:125.19px;font-size:6.3px;color:#333;width:58.90px;overflow:hidden;letter-spacing:0.6px">なし</div>
<div class="t" id="t74" style="left:13.40px;top:138.55px;font-size:6.4px;color:#333;transform:scaleX(0.9);transform-origin:0 0">4</div>
<div class="t" id="t75" style="left:61.00px;top:137.69px;font-size:6.3px;color:#3a3a3a;letter-spacing:0.55px">接待交際費</div>
<div class="t" id="t76" style="left:120.10px;top:138.44px;font-size:6.6px;color:#333;width:65.65px;overflow:hidden;transform:scaleX(0.88);transform-origin:0 0">2025/11/04</div>
<div class="t" id="t77" style="left:188.25px;top:137.69px;font-size:6.3px;color:#333;width:64.35px;overflow:hidden;letter-spacing:0.6px">サンプル軒</div>
<div class="t" id="t78" style="left:255.10px;top:137.69px;font-size:6.3px;color:#333;width:66.30px;overflow:hidden;letter-spacing:0.6px">サンプル花子</div>
<div class="t" id="t79" style="left:323.90px;top:137.69px;font-size:6.3px;color:#333;width:64.60px;overflow:hidden;letter-spacing:0.6px">クレジット</div>
<div class="t" id="t80" style="left:391.00px;top:138.44px;font-size:6.6px;color:#333;width:64.75px;overflow:hidden;transform:scaleX(0.88);transform-origin:0 0">8500</div>
<div class="t" id="t81" style="left:458.25px;top:138.44px;font-size:6.6px;color:#333;width:64.75px;overflow:hidden;transform:scaleX(0.88);transform-origin:0 0">0</div>
<div class="t" id="t82" style="left:525.50px;top:138.44px;font-size:6.6px;color:#333;width:65.90px;overflow:hidden;transform:scaleX(0.88);transform-origin:0 0">8500</div>
<div class="t" id="t83" style="left:593.90px;top:138.44px;font-size:6.6px;color:#333;width:65.60px;overflow:hidden;transform:scaleX(0.88);transform-origin:0 0">0</div>
<div class="t" id="t84" style="left:662.00px;top:138.44px;font-size:6.6px;color:#333;width:65.00px;overflow:hidden;transform:scaleX(0.88);transform-origin:0 0">8500</div>
<div class="t" id="t85" style="left:729.50px;top:137.69px;font-size:6.3px;color:#333;width:58.90px;overflow:hidden;letter-spacing:0.6px">なし</div>
<div class="t" id="t86" style="left:13.40px;top:151.05px;font-size:6.4px;color:#333;transform:scaleX(0.9);transform-origin:0 0">5</div>
<div class="t" id="t87" style="left:61.00px;top:150.19px;font-size:6.3px;color:#3a3a3a;letter-spacing:0.55px">支払手数料</div>
<div class="t" id="t88" style="left:120.10px;top:150.94px;font-size:6.6px;color:#333;width:65.65px;overflow:hidden;transform:scaleX(0.88);transform-origin:0 0">2025/11/05</div>
<div class="t" id="t89" style="left:188.25px;top:150.19px;font-size:6.3px;color:#333;width:64.35px;overflow:hidden;letter-spacing:0.6px">サンプルサブスク</div>
<div class="t" id="t90" style="left:255.10px;top:150.19px;font-size:6.3px;color:#333;width:66.30px;overflow:hidden;letter-spacing:0.6px">サンプル太郎</div>
<div class="t" id="t91" style="left:323.90px;top:150.19px;font-size:6.3px;color:#333;width:64.60px;overflow:hidden;letter-spacing:0.6px">振込</div>
<div class="t" id="t92" style="left:391.00px;top:150.94px;font-size:6.6px;color:#333;width:64.75px;overflow:hidden;transform:scaleX(0.88);transform-origin:0 0">1500</div>
<div class="t" id="t93" style="left:458.25px;top:150.94px;font-size:6.6px;color:#333;width:64.75px;overflow:hidden;transform:scaleX(0.88);transform-origin:0 0">150</div>
<div class="t" id="t94" style="left:525.50px;top:150.94px;font-size:6.6px;color:#333;width:65.90px;overflow:hidden;transform:scaleX(0.88);transform-origin:0 0">1650</div>
<div class="t" id="t95" style="left:593.90px;top:150.94px;font-size:6.6px;color:#333;width:65.60px;overflow:hidden;transform:scaleX(0.88);transform-origin:0 0">1650</div>
<div class="t" id="t96" style="left:662.00px;top:150.94px;font-size:6.6px;color:#333;width:65.00px;overflow:hidden;transform:scaleX(0.88);transform-origin:0 0">0</div>
<div class="t" id="t97" style="left:729.50px;top:150.19px;font-size:6.3px;color:#333;width:58.90px;overflow:hidden;letter-spacing:0.6px">あり</div>
<div class="t" id="t98" style="left:13.40px;top:163.55px;font-size:6.4px;color:#333;transform:scaleX(0.9);transform-origin:0 0">6</div>
<div class="t" id="t99" style="left:61.00px;top:162.69px;font-size:6.3px;color:#3a3a3a;letter-spacing:0.55px">旅費交通費</div>
<div class="t" id="t100" style="left:120.10px;top:163.44px;font-size:6.6px;color:#333;width:65.65px;overflow:hidden;transform:scaleX(0.88);transform-origin:0 0">2025/11/06</div>
<div class="t" id="t101" style="left:188.25px;top:162.69px;font-size:6.3px;color:#333;width:64.35px;overflow:hidden;letter-spacing:0.6px">サンプル電鉄</div>
<div class="t" id="t102" style="left:255.10px;top:162.69px;font-size:6.3px;color:#333;width:66.30px;overflow:hidden;letter-spacing:0.6px">サンプル花子</div>
<div class="t" id="t103" style="left:323.90px;top:162.69px;font-size:6.3px;color:#333;width:64.60px;overflow:hidden;letter-spacing:0.6px">クレジット</div>
<div class="t" id="t104" style="left:391.00px;top:163.44px;font-size:6.6px;color:#333;width:64.75px;overflow:hidden;transform:scaleX(0.88);transform-origin:0 0">780</div>
<div class="t" id="t105" style="left:458.25px;top:163.44px;font-size:6.6px;color:#333;width:64.75px;overflow:hidden;transform:scaleX(0.88);transform-origin:0 0">0</div>
<div class="t" id="t106" style="left:525.50px;top:163.44px;font-size:6.6px;color:#333;width:65.90px;overflow:hidden;transform:scaleX(0.88);transform-origin:0 0">780</div>
<div class="t" id="t107" style="left:593.90px;top:163.44px;font-size:6.6px;color:#333;width:65.60px;overflow:hidden;transform:scaleX(0.88);transform-origin:0 0">780</div>
<div class="t" id="t108" style="left:662.00px;top:163.44px;font-size:6.6px;color:#333;width:65.00px;overflow:hidden;transform:scaleX(0.88);transform-origin:0 0">0</div>
<div class="t" id="t109" style="left:729.50px;top:162.69px;font-size:6.3px;color:#333;width:58.90px;overflow:hidden;letter-spacing:0.6px">なし</div>
<div class="t" id="t110" style="left:13.40px;top:176.05px;font-size:6.4px;color:#333;transform:scaleX(0.9);transform-origin:0 0">7</div>
<div class="t" id="t111" style="left:61.00px;top:175.19px;font-size:6.3px;color:#3a3a3a;letter-spacing:0.55px">旅費交通費</div>
<div class="t" id="t112" style="left:120.10px;top:175.94px;font-size:6.6px;color:#333;width:65.65px;overflow:hidden;transform:scaleX(0.88);transform-origin:0 0">2025/11/07</div>
<div class="t" id="t113" style="left:188.25px;top:175.19px;font-size:6.3px;color:#333;width:64.35px;overflow:hidden;letter-spacing:0.6px">サンプルトレイン</div>
<div class="t" id="t114" style="left:255.10px;top:175.19px;font-size:6.3px;color:#333;width:66.30px;overflow:hidden;letter-spacing:0.6px">サンプル太郎</div>
<div class="t" id="t115" style="left:323.90px;top:175.19px;font-size:6.3px;color:#333;width:64.60px;overflow:hidden;letter-spacing:0.6px">クレジット</div>
<div class="t" id="t116" style="left:391.00px;top:175.94px;font-size:6.6px;color:#333;width:64.75px;overflow:hidden;transform:scaleX(0.88);transform-origin:0 0">2200</div>
<div class="t" id="t117" style="left:458.25px;top:175.94px;font-size:6.6px;color:#333;width:64.75px;overflow:hidden;transform:scaleX(0.88);transform-origin:0 0">0</div>
<div class="t" id="t118" style="left:525.50px;top:175.94px;font-size:6.6px;color:#333;width:65.90px;overflow:hidden;transform:scaleX(0.88);transform-origin:0 0">2200</div>
<div class="t" id="t119" style="left:593.90px;top:175.94px;font-size:6.6px;color:#333;width:65.60px;overflow:hidden;transform:scaleX(0.88);transform-origin:0 0">0</div>
<div class="t" id="t120" style="left:662.00px;top:175.94px;font-size:6.6px;color:#333;width:65.00px;overflow:hidden;transform:scaleX(0.88);transform-origin:0 0">2200</div>
<div class="t" id="t121" style="left:729.50px;top:175.19px;font-size:6.3px;color:#333;width:58.90px;overflow:hidden;letter-spacing:0.6px">なし</div>
<div class="t" id="t122" style="left:13.40px;top:188.55px;font-size:6.4px;color:#333;transform:scaleX(0.9);transform-origin:0 0">8</div>
<div class="t" id="t123" style="left:61.00px;top:187.69px;font-size:6.3px;color:#3a3a3a;letter-spacing:0.55px">水道光熱費</div>
<div class="t" id="t124" style="left:120.10px;top:188.44px;font-size:6.6px;color:#333;width:65.65px;overflow:hidden;transform:scaleX(0.88);transform-origin:0 0">2025/11/08</div>
<div class="t" id="t125" style="left:188.25px;top:187.69px;font-size:6.3px;color:#333;width:64.35px;overflow:hidden;letter-spacing:0.6px">サンプルガス</div>
<div class="t" id="t126" style="left:255.10px;top:187.69px;font-size:6.3px;color:#333;width:66.30px;overflow:hidden;letter-spacing:0.6px">サンプル花子</div>
<div class="t" id="t127" style="left:323.90px;top:187.69px;font-size:6.3px;color:#333;width:64.60px;overflow:hidden;letter-spacing:0.6px">振込</div>
<div class="t" id="t128" style="left:391.00px;top:188.44px;font-size:6.6px;color:#333;width:64.75px;overflow:hidden;transform:scaleX(0.88);transform-origin:0 0">4300</div>
<div class="t" id="t129" style="left:458.25px;top:188.44px;font-size:6.6px;color:#333;width:64.75px;overflow:hidden;transform:scaleX(0.88);transform-origin:0 0">100</div>
<div class="t" id="t130" style="left:525.50px;top:188.44px;font-size:6.6px;color:#333;width:65.90px;overflow:hidden;transform:scaleX(0.88);transform-origin:0 0">4400</div>
<div class="t" id="t131" style="left:593.90px;top:188.44px;font-size:6.6px;color:#333;width:65.60px;overflow:hidden;transform:scaleX(0.88);transform-origin:0 0">4400</div>
<div class="t" id="t132" style="left:662.00px;top:188.44px;font-size:6.6px;color:#333;width:65.00px;overflow:hidden;transform:scaleX(0.88);transform-origin:0 0">0</div>
<div class="t" id="t133" style="left:729.50px;top:187.69px;font-size:6.3px;color:#333;width:58.90px;overflow:hidden;letter-spacing:0.6px">なし</div>
<div class="t" id="t134" style="left:13.40px;top:201.05px;font-size:6.4px;color:#333;transform:scaleX(0.9);transform-origin:0 0">9</div>
<div class="t" id="t135" style="left:61.00px;top:200.19px;font-size:6.3px;color:#3a3a3a;letter-spacing:0.55px">水道光熱費</div>
<div class="t" id="t136" style="left:120.10px;top:200.94px;font-size:6.6px;color:#333;width:65.65px;overflow:hidden;transform:scaleX(0.88);transform-origin:0 0">2025/11/09</div>
<div class="t" id="t137" style="left:188.25px;top:200.19px;font-size:6.3px;color:#333;width:64.35px;overflow:hidden;letter-spacing:0.6px">サンプル電気</div>
<div class="t" id="t138" style="left:255.10px;top:200.19px;font-size:6.3px;color:#333;width:66.30px;overflow:hidden;letter-spacing:0.6px">サンプル太郎</div>
<div class="t" id="t139" style="left:323.90px;top:200.19px;font-size:6.3px;color:#333;width:64.60px;overflow:hidden;letter-spacing:0.6px">振込</div>
<div class="t" id="t140" style="left:391.00px;top:200.94px;font-size:6.6px;color:#333;width:64.75px;overflow:hidden;transform:scaleX(0.88);transform-origin:0 0">5200</div>
<div class="t" id="t141" style="left:458.25px;top:200.94px;font-size:6.6px;color:#333;width:64.75px;overflow:hidden;transform:scaleX(0.88);transform-origin:0 0">100</div>
<div class="t" id="t142" style="left:525.50px;top:200.94px;font-size:6.6px;color:#333;width:65.90px;overflow:hidden;transform:scaleX(0.88);transform-origin:0 0">5300</div>
<div class="t" id="t143" style="left:593.90px;top:200.94px;font-size:6.6px;color:#333;width:65.60px;overflow:hidden;transform:scaleX(0.88);transform-origin:0 0">5300</div>
<div class="t" id="t144" style="left:662.00px;top:200.94px;font-size:6.6px;color:#333;width:65.00px;overflow:hidden;transform:scaleX(0.88);transform-origin:0 0">0</div>
<div class="t" id="t145" style="left:729.50px;top:200.19px;font-size:6.3px;color:#333;width:58.90px;overflow:hidden;letter-spacing:0.6px">なし</div>
<div class="t" id="t146" style="left:13.40px;top:213.55px;font-size:6.4px;color:#333;transform:scaleX(0.9);transform-origin:0 0">10</div>
<div class="t" id="t147" style="left:61.00px;top:212.69px;font-size:6.3px;color:#3a3a3a;letter-spacing:0.55px">消耗品費</div>
<div class="t" id="t148" style="left:120.10px;top:213.44px;font-size:6.6px;color:#333;width:65.65px;overflow:hidden;transform:scaleX(0.88);transform-origin:0 0">2025/11/10</div>
<div class="t" id="t149" style="left:188.25px;top:213.44px;font-size:6.6px;color:#333;width:64.35px;overflow:hidden;transform:scaleX(0.88);transform-origin:0 0">Sample.CO.JP</div>
<div class="t" id="t150" style="left:255.10px;top:212.69px;font-size:6.3px;color:#333;width:66.30px;overflow:hidden;letter-spacing:0.6px">サンプル花子</div>
<div class="t" id="t151" style="left:323.90px;top:212.69px;font-size:6.3px;color:#333;width:64.60px;overflow:hidden;letter-spacing:0.6px">クレジット</div>
<div class="t" id="t152" style="left:391.00px;top:213.44px;font-size:6.6px;color:#333;width:64.75px;overflow:hidden;transform:scaleX(0.88);transform-origin:0 0">2600</div>
<div class="t" id="t153" style="left:458.25px;top:213.44px;font-size:6.6px;color:#333;width:64.75px;overflow:hidden;transform:scaleX(0.88);transform-origin:0 0">0</div>
<div class="t" id="t154" style="left:525.50px;top:213.44px;font-size:6.6px;color:#333;width:65.90px;overflow:hidden;transform:scaleX(0.88);transform-origin:0 0">2600</div>
<div class="t" id="t155" style="left:593.90px;top:213.44px;font-size:6.6px;color:#333;width:65.60px;overflow:hidden;transform:scaleX(0.88);transform-origin:0 0">0</div>
<div class="t" id="t156" style="left:662.00px;top:213.44px;font-size:6.6px;color:#333;width:65.00px;overflow:hidden;transform:scaleX(0.88);transform-origin:0 0">2600</div>
<div class="t" id="t157" style="left:729.50px;top:212.69px;font-size:6.3px;color:#333;width:58.90px;overflow:hidden;letter-spacing:0.6px">あり</div>
<div class="t" id="t158" style="left:13.40px;top:226.05px;font-size:6.4px;color:#333;transform:scaleX(0.9);transform-origin:0 0">11</div>
<div class="t" id="t159" style="left:61.00px;top:225.19px;font-size:6.3px;color:#3a3a3a;letter-spacing:0.55px">消耗品費</div>
<div class="t" id="t160" style="left:120.10px;top:225.94px;font-size:6.6px;color:#333;width:65.65px;overflow:hidden;transform:scaleX(0.88);transform-origin:0 0">2025/11/11</div>
<div class="t" id="t161" style="left:188.25px;top:225.19px;font-size:6.3px;color:#333;width:64.35px;overflow:hidden;letter-spacing:0.6px">サンプルモール</div>
<div class="t" id="t162" style="left:255.10px;top:225.19px;font-size:6.3px;color:#333;width:66.30px;overflow:hidden;letter-spacing:0.6px">サンプル太郎</div>
<div class="t" id="t163" style="left:323.90px;top:225.19px;font-size:6.3px;color:#333;width:64.60px;overflow:hidden;letter-spacing:0.6px">クレジット</div>
<div class="t" id="t164" style="left:391.00px;top:225.94px;font-size:6.6px;color:#333;width:64.75px;overflow:hidden;transform:scaleX(0.88);transform-origin:0 0">1800</div>
<div class="t" id="t165" style="left:458.25px;top:225.94px;font-size:6.6px;color:#333;width:64.75px;overflow:hidden;transform:scaleX(0.88);transform-origin:0 0">0</div>
<div class="t" id="t166" style="left:525.50px;top:225.94px;font-size:6.6px;color:#333;width:65.90px;overflow:hidden;transform:scaleX(0.88);transform-origin:0 0">1800</div>
<div class="t" id="t167" style="left:593.90px;top:225.94px;font-size:6.6px;color:#333;width:65.60px;overflow:hidden;transform:scaleX(0.88);transform-origin:0 0">1800</div>
<div class="t" id="t168" style="left:662.00px;top:225.94px;font-size:6.6px;color:#333;width:65.00px;overflow:hidden;transform:scaleX(0.88);transform-origin:0 0">0</div>
<div class="t" id="t169" style="left:729.50px;top:225.19px;font-size:6.3px;color:#333;width:58.90px;overflow:hidden;letter-spacing:0.6px">なし</div>
<div class="t" id="t170" style="left:13.40px;top:238.55px;font-size:6.4px;color:#333;transform:scaleX(0.9);transform-origin:0 0">12</div>
<div class="t" id="t171" style="left:61.00px;top:237.69px;font-size:6.3px;color:#3a3a3a;letter-spacing:0.55px">消耗品費</div>
<div class="t" id="t172" style="left:120.10px;top:238.44px;font-size:6.6px;color:#333;width:65.65px;overflow:hidden;transform:scaleX(0.88);transform-origin:0 0">2025/11/12</div>
<div class="t" id="t173" style="left:188.25px;top:237.69px;font-size:6.3px;color:#333;width:64.35px;overflow:hidden;letter-spacing:0.6px">ｻﾝﾌﾟﾙｶﾒﾗｼｮｯﾌﾟ ﾄｳｷｮｳ</div>
<div class="t" id="t174" style="left:255.10px;top:237.69px;font-size:6.3px;color:#333;width:66.30px;overflow:hidden;letter-spacing:0.6px">サンプル花子</div>
<div class="t" id="t175" style="left:323.90px;top:237.69px;font-size:6.3px;color:#333;width:64.60px;overflow:hidden;letter-spacing:0.6px">クレジット</div>
<div class="t" id="t176" style="left:391.00px;top:238.44px;font-size:6.6px;color:#333;width:64.75px;overflow:hidden;transform:scaleX(0.88);transform-origin:0 0">9800</div>
<div class="t" id="t177" style="left:458.25px;top:238.44px;font-size:6.6px;color:#333;width:64.75px;overflow:hidden;transform:scaleX(0.88);transform-origin:0 0">0</div>
<div class="t" id="t178" style="left:525.50px;top:238.44px;font-size:6.6px;color:#333;width:65.90px;overflow:hidden;transform:scaleX(0.88);transform-origin:0 0">9800</div>
<div class="t" id="t179" style="left:593.90px;top:238.44px;font-size:6.6px;color:#333;width:65.60px;overflow:hidden;transform:scaleX(0.88);transform-origin:0 0">0</div>
<div class="t" id="t180" style="left:662.00px;top:238.44px;font-size:6.6px;color:#333;width:65.00px;overflow:hidden;transform:scaleX(0.88);transform-origin:0 0">9800</div>
<div class="t" id="t181" style="left:729.50px;top:237.69px;font-size:6.3px;color:#333;width:58.90px;overflow:hidden;letter-spacing:0.6px">あり</div>
<div class="t" id="t182" style="left:13.40px;top:251.05px;font-size:6.4px;color:#333;transform:scaleX(0.9);transform-origin:0 0">13</div>
<div class="t" id="t183" style="left:61.00px;top:250.19px;font-size:6.3px;color:#3a3a3a;letter-spacing:0.55px">研究資料費</div>
<div class="t" id="t184" style="left:120.10px;top:250.94px;font-size:6.6px;color:#333;width:65.65px;overflow:hidden;transform:scaleX(0.88);transform-origin:0 0">2025/11/13</div>
<div class="t" id="t185" style="left:188.25px;top:250.19px;font-size:6.3px;color:#333;width:64.35px;overflow:hidden;letter-spacing:0.6px">サンプルブックス</div>
<div class="t" id="t186" style="left:255.10px;top:250.19px;font-size:6.3px;color:#333;width:66.30px;overflow:hidden;letter-spacing:0.6px">サンプル太郎</div>
<div class="t" id="t187" style="left:323.90px;top:250.19px;font-size:6.3px;color:#333;width:64.60px;overflow:hidden;letter-spacing:0.6px">クレジット</div>
<div class="t" id="t188" style="left:391.00px;top:250.94px;font-size:6.6px;color:#333;width:64.75px;overflow:hidden;transform:scaleX(0.88);transform-origin:0 0">3400</div>
<div class="t" id="t189" style="left:458.25px;top:250.94px;font-size:6.6px;color:#333;width:64.75px;overflow:hidden;transform:scaleX(0.88);transform-origin:0 0">0</div>
<div class="t" id="t190" style="left:525.50px;top:250.94px;font-size:6.6px;color:#333;width:65.90px;overflow:hidden;transform:scaleX(0.88);transform-origin:0 0">3400</div>
<div class="t" id="t191" style="left:593.90px;top:250.94px;font-size:6.6px;color:#333;width:65.60px;overflow:hidden;transform:scaleX(0.88);transform-origin:0 0">3400</div>
<div class="t" id="t192" style="left:662.00px;top:250.94px;font-size:6.6px;color:#333;width:65.00px;overflow:hidden;transform:scaleX(0.88);transform-origin:0 0">0</div>
<div class="t" id="t193" style="left:729.50px;top:250.19px;font-size:6.3px;color:#333;width:58.90px;overflow:hidden;letter-spacing:0.6px">なし</div>
<div class="t" id="t194" style="left:13.40px;top:263.55px;font-size:6.4px;color:#333;transform:scaleX(0.9);transform-origin:0 0">14</div>
<div class="t" id="t195" style="left:61.00px;top:262.69px;font-size:6.3px;color:#3a3a3a;letter-spacing:0.55px">研究資料費</div>
<div class="t" id="t196" style="left:120.10px;top:263.44px;font-size:6.6px;color:#333;width:65.65px;overflow:hidden;transform:scaleX(0.88);transform-origin:0 0">2025/11/14</div>
<div class="t" id="t197" style="left:188.25px;top:262.69px;font-size:6.3px;color:#333;width:64.35px;overflow:hidden;letter-spacing:0.6px">サンプル書店</div>
<div class="t" id="t198" style="left:255.10px;top:262.69px;font-size:6.3px;color:#333;width:66.30px;overflow:hidden;letter-spacing:0.6px">サンプル花子</div>
<div class="t" id="t199" style="left:323.90px;top:262.69px;font-size:6.3px;color:#333;width:64.60px;overflow:hidden;letter-spacing:0.6px">クレジット</div>
<div class="t" id="t200" style="left:391.00px;top:263.44px;font-size:6.6px;color:#333;width:64.75px;overflow:hidden;transform:scaleX(0.88);transform-origin:0 0">2900</div>
<div class="t" id="t201" style="left:458.25px;top:263.44px;font-size:6.6px;color:#333;width:64.75px;overflow:hidden;transform:scaleX(0.88);transform-origin:0 0">0</div>
<div class="t" id="t202" style="left:525.50px;top:263.44px;font-size:6.6px;color:#333;width:65.90px;overflow:hidden;transform:scaleX(0.88);transform-origin:0 0">2900</div>
<div class="t" id="t203" style="left:593.90px;top:263.44px;font-size:6.6px;color:#333;width:65.60px;overflow:hidden;transform:scaleX(0.88);transform-origin:0 0">0</div>
<div class="t" id="t204" style="left:662.00px;top:263.44px;font-size:6.6px;color:#333;width:65.00px;overflow:hidden;transform:scaleX(0.88);transform-origin:0 0">2900</div>
<div class="t" id="t205" style="left:729.50px;top:262.69px;font-size:6.3px;color:#333;width:58.90px;overflow:hidden;letter-spacing:0.6px">なし</div>
<div class="t" id="t206" style="left:13.40px;top:276.05px;font-size:6.4px;color:#333;transform:scaleX(0.9);transform-origin:0 0">15</div>
<div class="t" id="t207" style="left:61.00px;top:275.19px;font-size:6.3px;color:#3a3a3a;letter-spacing:0.55px">福利厚生費</div>
<div class="t" id="t208" style="left:120.10px;top:275.94px;font-size:6.6px;color:#333;width:65.65px;overflow:hidden;transform:scaleX(0.88);transform-origin:0 0">2025/11/15</div>
<div class="t" id="t209" style="left:188.25px;top:275.19px;font-size:6.3px;color:#333;width:64.35px;overflow:hidden;letter-spacing:0.6px">ＳＡＭＰＬＥ　ＬＡＮＤ</div>
<div class="t" id="t210" style="left:255.10px;top:275.19px;font-size:6.3px;color:#333;width:66.30px;overflow:hidden;letter-spacing:0.6px">サンプル太郎</div>
<div class="t" id="t211" style="left:323.90px;top:275.19px;font-size:6.3px;color:#333;width:64.60px;overflow:hidden;letter-spacing:0.6px">振込</div>
<div class="t" id="t212" style="left:391.00px;top:275.94px;font-size:6.6px;color:#333;width:64.75px;overflow:hidden;transform:scaleX(0.88);transform-origin:0 0">6000</div>
<div class="t" id="t213" style="left:458.25px;top:275.94px;font-size:6.6px;color:#333;width:64.75px;overflow:hidden;transform:scaleX(0.88);transform-origin:0 0">200</div>
<div class="t" id="t214" style="left:525.50px;top:275.94px;font-size:6.6px;color:#333;width:65.90px;overflow:hidden;transform:scaleX(0.88);transform-origin:0 0">6200</div>
<div class="t" id="t215" style="left:593.90px;top:275.94px;font-size:6.6px;color:#333;width:65.60px;overflow:hidden;transform:scaleX(0.88);transform-origin:0 0">6200</div>
<div class="t" id="t216" style="left:662.00px;top:275.94px;font-size:6.6px;color:#333;width:65.00px;overflow:hidden;transform:scaleX(0.88);transform-origin:0 0">0</div>
<div class="t" id="t217" style="left:729.50px;top:275.19px;font-size:6.3px;color:#333;width:58.90px;overflow:hidden;letter-spacing:0.6px">あり</div>
<div class="t" id="t218" style="left:13.40px;top:288.55px;font-size:6.4px;color:#333;transform:scaleX(0.9);transform-origin:0 0">16</div>
<div class="t" id="t219" style="left:61.00px;top:287.69px;font-size:6.3px;color:#3a3a3a;letter-spacing:0.55px">荷造費</div>
<div class="t" id="t220" style="left:120.10px;top:288.44px;font-size:6.6px;color:#333;width:65.65px;overflow:hidden;transform:scaleX(0.88);transform-origin:0 0">2025/11/16</div>
<div class="t" id="t221" style="left:188.25px;top:287.69px;font-size:6.3px;color:#333;width:64.35px;overflow:hidden;letter-spacing:0.6px">サンプル運送</div>
<div class="t" id="t222" style="left:255.10px;top:287.69px;font-size:6.3px;color:#333;width:66.30px;overflow:hidden;letter-spacing:0.6px">サンプル花子</div>
<div class="t" id="t223" style="left:323.90px;top:287.69px;font-size:6.3px;color:#333;width:64.60px;overflow:hidden;letter-spacing:0.6px">クレジット</div>
<div class="t" id="t224" style="left:391.00px;top:288.44px;font-size:6.6px;color:#333;width:64.75px;overflow:hidden;transform:scaleX(0.88);transform-origin:0 0">2100</div>
<div class="t" id="t225" style="left:458.25px;top:288.44px;font-size:6.6px;color:#333;width:64.75px;overflow:hidden;transform:scaleX(0.88);transform-origin:0 0">0</div>
<div class="t" id="t226" style="left:525.50px;top:288.44px;font-size:6.6px;color:#333;width:65.90px;overflow:hidden;transform:scaleX(0.88);transform-origin:0 0">2100</div>
<div class="t" id="t227" style="left:593.90px;top:288.44px;font-size:6.6px;color:#333;width:65.60px;overflow:hidden;transform:scaleX(0.88);transform-origin:0 0">2100</div>
<div class="t" id="t228" style="left:662.00px;top:288.44px;font-size:6.6px;color:#333;width:65.00px;overflow:hidden;transform:scaleX(0.88);transform-origin:0 0">0</div>
<div class="t" id="t229" style="left:729.50px;top:287.69px;font-size:6.3px;color:#333;width:58.90px;overflow:hidden;letter-spacing:0.6px">なし</div>
<div class="t" id="t230" style="left:13.40px;top:301.05px;font-size:6.4px;color:#333;transform:scaleX(0.9);transform-origin:0 0">17</div>
<div class="t" id="t231" style="left:61.00px;top:300.19px;font-size:6.3px;color:#3a3a3a;letter-spacing:0.55px">通信費</div>
<div class="t" id="t232" style="left:120.10px;top:300.94px;font-size:6.6px;color:#333;width:65.65px;overflow:hidden;transform:scaleX(0.88);transform-origin:0 0">2025/11/17</div>
<div class="t" id="t233" style="left:188.25px;top:300.19px;font-size:6.3px;color:#333;width:64.35px;overflow:hidden;letter-spacing:0.6px">サンプル通信料</div>
<div class="t" id="t234" style="left:255.10px;top:300.19px;font-size:6.3px;color:#333;width:66.30px;overflow:hidden;letter-spacing:0.6px">サンプル太郎</div>
<div class="t" id="t235" style="left:323.90px;top:300.19px;font-size:6.3px;color:#333;width:64.60px;overflow:hidden;letter-spacing:0.6px">振込</div>
<div class="t" id="t236" style="left:391.00px;top:300.94px;font-size:6.6px;color:#333;width:64.75px;overflow:hidden;transform:scaleX(0.88);transform-origin:0 0">3500</div>
<div class="t" id="t237" style="left:458.25px;top:300.94px;font-size:6.6px;color:#333;width:64.75px;overflow:hidden;transform:scaleX(0.88);transform-origin:0 0">100</div>
<div class="t" id="t238" style="left:525.50px;top:300.94px;font-size:6.6px;color:#333;width:65.90px;overflow:hidden;transform:scaleX(0.88);transform-origin:0 0">3600</div>
<div class="t" id="t239" style="left:593.90px;top:300.94px;font-size:6.6px;color:#333;width:65.60px;overflow:hidden;transform:scaleX(0.88);transform-origin:0 0">3600</div>
<div class="t" id="t240" style="left:662.00px;top:300.94px;font-size:6.6px;color:#333;width:65.00px;overflow:hidden;transform:scaleX(0.88);transform-origin:0 0">0</div>
<div class="t" id="t241" style="left:729.50px;top:300.19px;font-size:6.3px;color:#333;width:58.90px;overflow:hidden;letter-spacing:0.6px">なし</div>
<div class="t" id="t242" style="left:13.40px;top:313.55px;font-size:6.4px;color:#333;transform:scaleX(0.9);transform-origin:0 0">18</div>
<div class="t" id="t243" style="left:61.00px;top:312.69px;font-size:6.3px;color:#3a3a3a;letter-spacing:0.55px">通信費</div>
<div class="t" id="t244" style="left:120.10px;top:313.44px;font-size:6.6px;color:#333;width:65.65px;overflow:hidden;transform:scaleX(0.88);transform-origin:0 0">2025/11/18</div>
<div class="t" id="t245" style="left:188.25px;top:312.69px;font-size:6.3px;color:#333;width:64.35px;overflow:hidden;letter-spacing:0.6px">サンプルインターネット</div>
<div class="t" id="t246" style="left:255.10px;top:312.69px;font-size:6.3px;color:#333;width:66.30px;overflow:hidden;letter-spacing:0.6px">サンプル花子</div>
<div class="t" id="t247" style="left:323.90px;top:312.69px;font-size:6.3px;color:#333;width:64.60px;overflow:hidden;letter-spacing:0.6px">クレジット</div>
<div class="t" id="t248" style="left:391.00px;top:313.44px;font-size:6.6px;color:#333;width:64.75px;overflow:hidden;transform:scaleX(0.88);transform-origin:0 0">4200</div>
<div class="t" id="t249" style="left:458.25px;top:313.44px;font-size:6.6px;color:#333;width:64.75px;overflow:hidden;transform:scaleX(0.88);transform-origin:0 0">0</div>
<div class="t" id="t250" style="left:525.50px;top:313.44px;font-size:6.6px;color:#333;width:65.90px;overflow:hidden;transform:scaleX(0.88);transform-origin:0 0">4200</div>
<div class="t" id="t251" style="left:593.90px;top:313.44px;font-size:6.6px;color:#333;width:65.60px;overflow:hidden;transform:scaleX(0.88);transform-origin:0 0">0</div>
<div class="t" id="t252" style="left:662.00px;top:313.44px;font-size:6.6px;color:#333;width:65.00px;overflow:hidden;transform:scaleX(0.88);transform-origin:0 0">4200</div>
<div class="t" id="t253" style="left:729.50px;top:312.69px;font-size:6.3px;color:#333;width:58.90px;overflow:hidden;letter-spacing:0.6px">あり</div>
<div class="t" id="t254" style="left:13.40px;top:326.05px;font-size:6.4px;color:#333;transform:scaleX(0.9);transform-origin:0 0">19</div>
<div class="t" id="t255" style="left:61.00px;top:325.19px;font-size:6.3px;color:#3a3a3a;letter-spacing:0.55px">雑費</div>
<div class="t" id="t256" style="left:120.10px;top:325.94px;font-size:6.6px;color:#333;width:65.65px;overflow:hidden;transform:scaleX(0.88);transform-origin:0 0">2025/11/19</div>
<div class="t" id="t257" style="left:188.25px;top:325.19px;font-size:6.3px;color:#333;width:64.35px;overflow:hidden;letter-spacing:0.6px">サンプル雑貨店</div>
<div class="t" id="t258" style="left:255.10px;top:325.19px;font-size:6.3px;color:#333;width:66.30px;overflow:hidden;letter-spacing:0.6px">サンプル太郎</div>
<div class="t" id="t259" style="left:323.90px;top:325.19px;font-size:6.3px;color:#333;width:64.60px;overflow:hidden;letter-spacing:0.6px">クレジット</div>
<div class="t" id="t260" style="left:391.00px;top:325.94px;font-size:6.6px;color:#333;width:64.75px;overflow:hidden;transform:scaleX(0.88);transform-origin:0 0">900</div>
<div class="t" id="t261" style="left:458.25px;top:325.94px;font-size:6.6px;color:#333;width:64.75px;overflow:hidden;transform:scaleX(0.88);transform-origin:0 0">0</div>
<div class="t" id="t262" style="left:525.50px;top:325.94px;font-size:6.6px;color:#333;width:65.90px;overflow:hidden;transform:scaleX(0.88);transform-origin:0 0">900</div>
<div class="t" id="t263" style="left:593.90px;top:325.94px;font-size:6.6px;color:#333;width:65.60px;overflow:hidden;transform:scaleX(0.88);transform-origin:0 0">900</div>
<div class="t" id="t264" style="left:662.00px;top:325.94px;font-size:6.6px;color:#333;width:65.00px;overflow:hidden;transform:scaleX(0.88);transform-origin:0 0">0</div>
<div class="t" id="t265" style="left:729.50px;top:325.19px;font-size:6.3px;color:#333;width:58.90px;overflow:hidden;letter-spacing:0.6px">なし</div>
<div class="t" id="t266" style="left:13.40px;top:338.55px;font-size:6.4px;color:#333;transform:scaleX(0.9);transform-origin:0 0">20</div>
<div class="t" id="t267" style="left:61.00px;top:337.69px;font-size:6.3px;color:#3a3a3a;letter-spacing:0.55px">雑費</div>
<div class="t" id="t268" style="left:120.10px;top:338.44px;font-size:6.6px;color:#333;width:65.65px;overflow:hidden;transform:scaleX(0.88);transform-origin:0 0">2025/11/20</div>
<div class="t" id="t269" style="left:188.25px;top:337.69px;font-size:6.3px;color:#333;width:64.35px;overflow:hidden;letter-spacing:0.6px">サンプル100均店</div>
<div class="t" id="t270" style="left:255.10px;top:337.69px;font-size:6.3px;color:#333;width:66.30px;overflow:hidden;letter-spacing:0.6px">サンプル花子</div>
<div class="t" id="t271" style="left:323.90px;top:337.69px;font-size:6.3px;color:#333;width:64.60px;overflow:hidden;letter-spacing:0.6px">クレジット</div>
<div class="t" id="t272" style="left:391.00px;top:338.44px;font-size:6.6px;color:#333;width:64.75px;overflow:hidden;transform:scaleX(0.88);transform-origin:0 0">1100</div>
<div class="t" id="t273" style="left:458.25px;top:338.44px;font-size:6.6px;color:#333;width:64.75px;overflow:hidden;transform:scaleX(0.88);transform-origin:0 0">0</div>
<div class="t" id="t274" style="left:525.50px;top:338.44px;font-size:6.6px;color:#333;width:65.90px;overflow:hidden;transform:scaleX(0.88);transform-origin:0 0">1100</div>
<div class="t" id="t275" style="left:593.90px;top:338.44px;font-size:6.6px;color:#333;width:65.60px;overflow:hidden;transform:scaleX(0.88);transform-origin:0 0">1100</div>
<div class="t" id="t276" style="left:662.00px;top:338.44px;font-size:6.6px;color:#333;width:65.00px;overflow:hidden;transform:scaleX(0.88);transform-origin:0 0">0</div>
<div class="t" id="t277" style="left:729.50px;top:337.69px;font-size:6.3px;color:#333;width:58.90px;overflow:hidden;letter-spacing:0.6px">なし</div>
<div class="t" id="t278" style="left:13.40px;top:351.05px;font-size:6.4px;color:#333;transform:scaleX(0.9);transform-origin:0 0">21</div>
<div class="t" id="t279" style="left:61.00px;top:350.19px;font-size:6.3px;color:#3a3a3a;letter-spacing:0.55px">食費</div>
<div class="t" id="t280" style="left:120.10px;top:350.94px;font-size:6.6px;color:#333;width:65.65px;overflow:hidden;transform:scaleX(0.88);transform-origin:0 0">2025/11/21</div>
<div class="t" id="t281" style="left:188.25px;top:350.19px;font-size:6.3px;color:#333;width:64.35px;overflow:hidden;letter-spacing:0.6px">サンプル商店</div>
<div class="t" id="t282" style="left:255.10px;top:350.19px;font-size:6.3px;color:#333;width:66.30px;overflow:hidden;letter-spacing:0.6px">サンプル太郎</div>
<div class="t" id="t283" style="left:323.90px;top:350.19px;font-size:6.3px;color:#333;width:64.60px;overflow:hidden;letter-spacing:0.6px">クレジット</div>
<div class="t" id="t284" style="left:391.00px;top:350.94px;font-size:6.6px;color:#333;width:64.75px;overflow:hidden;transform:scaleX(0.88);transform-origin:0 0">2500</div>
<div class="t" id="t285" style="left:458.25px;top:350.94px;font-size:6.6px;color:#333;width:64.75px;overflow:hidden;transform:scaleX(0.88);transform-origin:0 0">0</div>
<div class="t" id="t286" style="left:525.50px;top:350.94px;font-size:6.6px;color:#333;width:65.90px;overflow:hidden;transform:scaleX(0.88);transform-origin:0 0">2500</div>
<div class="t" id="t287" style="left:593.90px;top:350.94px;font-size:6.6px;color:#333;width:65.60px;overflow:hidden;transform:scaleX(0.88);transform-origin:0 0">0</div>
<div class="t" id="t288" style="left:662.00px;top:350.94px;font-size:6.6px;color:#333;width:65.00px;overflow:hidden;transform:scaleX(0.88);transform-origin:0 0">2500</div>
<div class="t" id="t289" style="left:729.50px;top:350.19px;font-size:6.3px;color:#333;width:58.90px;overflow:hidden;letter-spacing:0.6px">なし</div>
<div class="t" id="t290" style="left:13.40px;top:363.55px;font-size:6.4px;color:#333;transform:scaleX(0.9);transform-origin:0 0">22</div>
<div class="t" id="t291" style="left:61.00px;top:362.69px;font-size:6.3px;color:#3a3a3a;letter-spacing:0.55px">食費</div>
<div class="t" id="t292" style="left:120.10px;top:363.44px;font-size:6.6px;color:#333;width:65.65px;overflow:hidden;transform:scaleX(0.88);transform-origin:0 0">2025/11/22</div>
<div class="t" id="t293" style="left:188.25px;top:362.69px;font-size:6.3px;color:#333;width:64.35px;overflow:hidden;letter-spacing:0.6px">サンプル市場店</div>
<div class="t" id="t294" style="left:255.10px;top:362.69px;font-size:6.3px;color:#333;width:66.30px;overflow:hidden;letter-spacing:0.6px">サンプル花子</div>
<div class="t" id="t295" style="left:323.90px;top:362.69px;font-size:6.3px;color:#333;width:64.60px;overflow:hidden;letter-spacing:0.6px">クレジット</div>
<div class="t" id="t296" style="left:391.00px;top:363.44px;font-size:6.6px;color:#333;width:64.75px;overflow:hidden;transform:scaleX(0.88);transform-origin:0 0">3100</div>
<div class="t" id="t297" style="left:458.25px;top:363.44px;font-size:6.6px;color:#333;width:64.75px;overflow:hidden;transform:scaleX(0.88);transform-origin:0 0">0</div>
<div class="t" id="t298" style="left:525.50px;top:363.44px;font-size:6.6px;color:#333;width:65.90px;overflow:hidden;transform:scaleX(0.88);transform-origin:0 0">3100</div>
<div class="t" id="t299" style="left:593.90px;top:363.44px;font-size:6.6px;color:#333;width:65.60px;overflow:hidden;transform:scaleX(0.88);transform-origin:0 0">3100</div>
<div class="t" id="t300" style="left:662.00px;top:363.44px;font-size:6.6px;color:#333;width:65.00px;overflow:hidden;transform:scaleX(0.88);transform-origin:0 0">0</div>
<div class="t" id="t301" style="left:729.50px;top:362.69px;font-size:6.3px;color:#333;width:58.90px;overflow:hidden;letter-spacing:0.6px">なし</div>
<div class="t" id="t302" style="left:13.40px;top:376.05px;font-size:6.4px;color:#333;transform:scaleX(0.9);transform-origin:0 0">23</div>
<div class="t" id="t303" style="left:61.00px;top:375.19px;font-size:6.3px;color:#3a3a3a;letter-spacing:0.55px">食費</div>
<div class="t" id="t304" style="left:120.10px;top:375.94px;font-size:6.6px;color:#333;width:65.65px;overflow:hidden;transform:scaleX(0.88);transform-origin:0 0">2025/11/23</div>
<div class="t" id="t305" style="left:188.25px;top:375.19px;font-size:6.3px;color:#333;width:64.35px;overflow:hidden;letter-spacing:0.6px">サンプルマーケット</div>
<div class="t" id="t306" style="left:255.10px;top:375.19px;font-size:6.3px;color:#333;width:66.30px;overflow:hidden;letter-spacing:0.6px">サンプル太郎</div>
<div class="t" id="t307" style="left:323.90px;top:375.19px;font-size:6.3px;color:#333;width:64.60px;overflow:hidden;letter-spacing:0.6px">クレジット</div>
<div class="t" id="t308" style="left:391.00px;top:375.94px;font-size:6.6px;color:#333;width:64.75px;overflow:hidden;transform:scaleX(0.88);transform-origin:0 0">3900</div>
<div class="t" id="t309" style="left:458.25px;top:375.94px;font-size:6.6px;color:#333;width:64.75px;overflow:hidden;transform:scaleX(0.88);transform-origin:0 0">0</div>
<div class="t" id="t310" style="left:525.50px;top:375.94px;font-size:6.6px;color:#333;width:65.90px;overflow:hidden;transform:scaleX(0.88);transform-origin:0 0">3900</div>
<div class="t" id="t311" style="left:593.90px;top:375.94px;font-size:6.6px;color:#333;width:65.60px;overflow:hidden;transform:scaleX(0.88);transform-origin:0 0">0</div>
<div class="t" id="t312" style="left:662.00px;top:375.94px;font-size:6.6px;color:#333;width:65.00px;overflow:hidden;transform:scaleX(0.88);transform-origin:0 0">3900</div>
<div class="t" id="t313" style="left:729.50px;top:375.19px;font-size:6.3px;color:#333;width:58.90px;overflow:hidden;letter-spacing:0.6px">なし</div>
<div class="t" id="t314" style="left:13.40px;top:388.55px;font-size:6.4px;color:#333;transform:scaleX(0.9);transform-origin:0 0">24</div>
<div class="t" id="t315" style="left:61.00px;top:387.69px;font-size:6.3px;color:#3a3a3a;letter-spacing:0.55px">食費</div>
<div class="t" id="t316" style="left:120.10px;top:388.44px;font-size:6.6px;color:#333;width:65.65px;overflow:hidden;transform:scaleX(0.88);transform-origin:0 0">2025/11/24</div>
<div class="t" id="t317" style="left:188.25px;top:387.69px;font-size:6.3px;color:#333;width:64.35px;overflow:hidden;letter-spacing:0.6px">サンプルうどん店</div>
<div class="t" id="t318" style="left:255.10px;top:387.69px;font-size:6.3px;color:#333;width:66.30px;overflow:hidden;letter-spacing:0.6px">サンプル花子</div>
<div class="t" id="t319" style="left:323.90px;top:387.69px;font-size:6.3px;color:#333;width:64.60px;overflow:hidden;letter-spacing:0.6px">クレジット</div>
<div class="t" id="t320" style="left:391.00px;top:388.44px;font-size:6.6px;color:#333;width:64.75px;overflow:hidden;transform:scaleX(0.88);transform-origin:0 0">1200</div>
<div class="t" id="t321" style="left:458.25px;top:388.44px;font-size:6.6px;color:#333;width:64.75px;overflow:hidden;transform:scaleX(0.88);transform-origin:0 0">0</div>
<div class="t" id="t322" style="left:525.50px;top:388.44px;font-size:6.6px;color:#333;width:65.90px;overflow:hidden;transform:scaleX(0.88);transform-origin:0 0">1200</div>
<div class="t" id="t323" style="left:593.90px;top:388.44px;font-size:6.6px;color:#333;width:65.60px;overflow:hidden;transform:scaleX(0.88);transform-origin:0 0">1200</div>
<div class="t" id="t324" style="left:662.00px;top:388.44px;font-size:6.6px;color:#333;width:65.00px;overflow:hidden;transform:scaleX(0.88);transform-origin:0 0">0</div>
<div class="t" id="t325" style="left:729.50px;top:387.69px;font-size:6.3px;color:#333;width:58.90px;overflow:hidden;letter-spacing:0.6px">なし</div>
</body></html>
